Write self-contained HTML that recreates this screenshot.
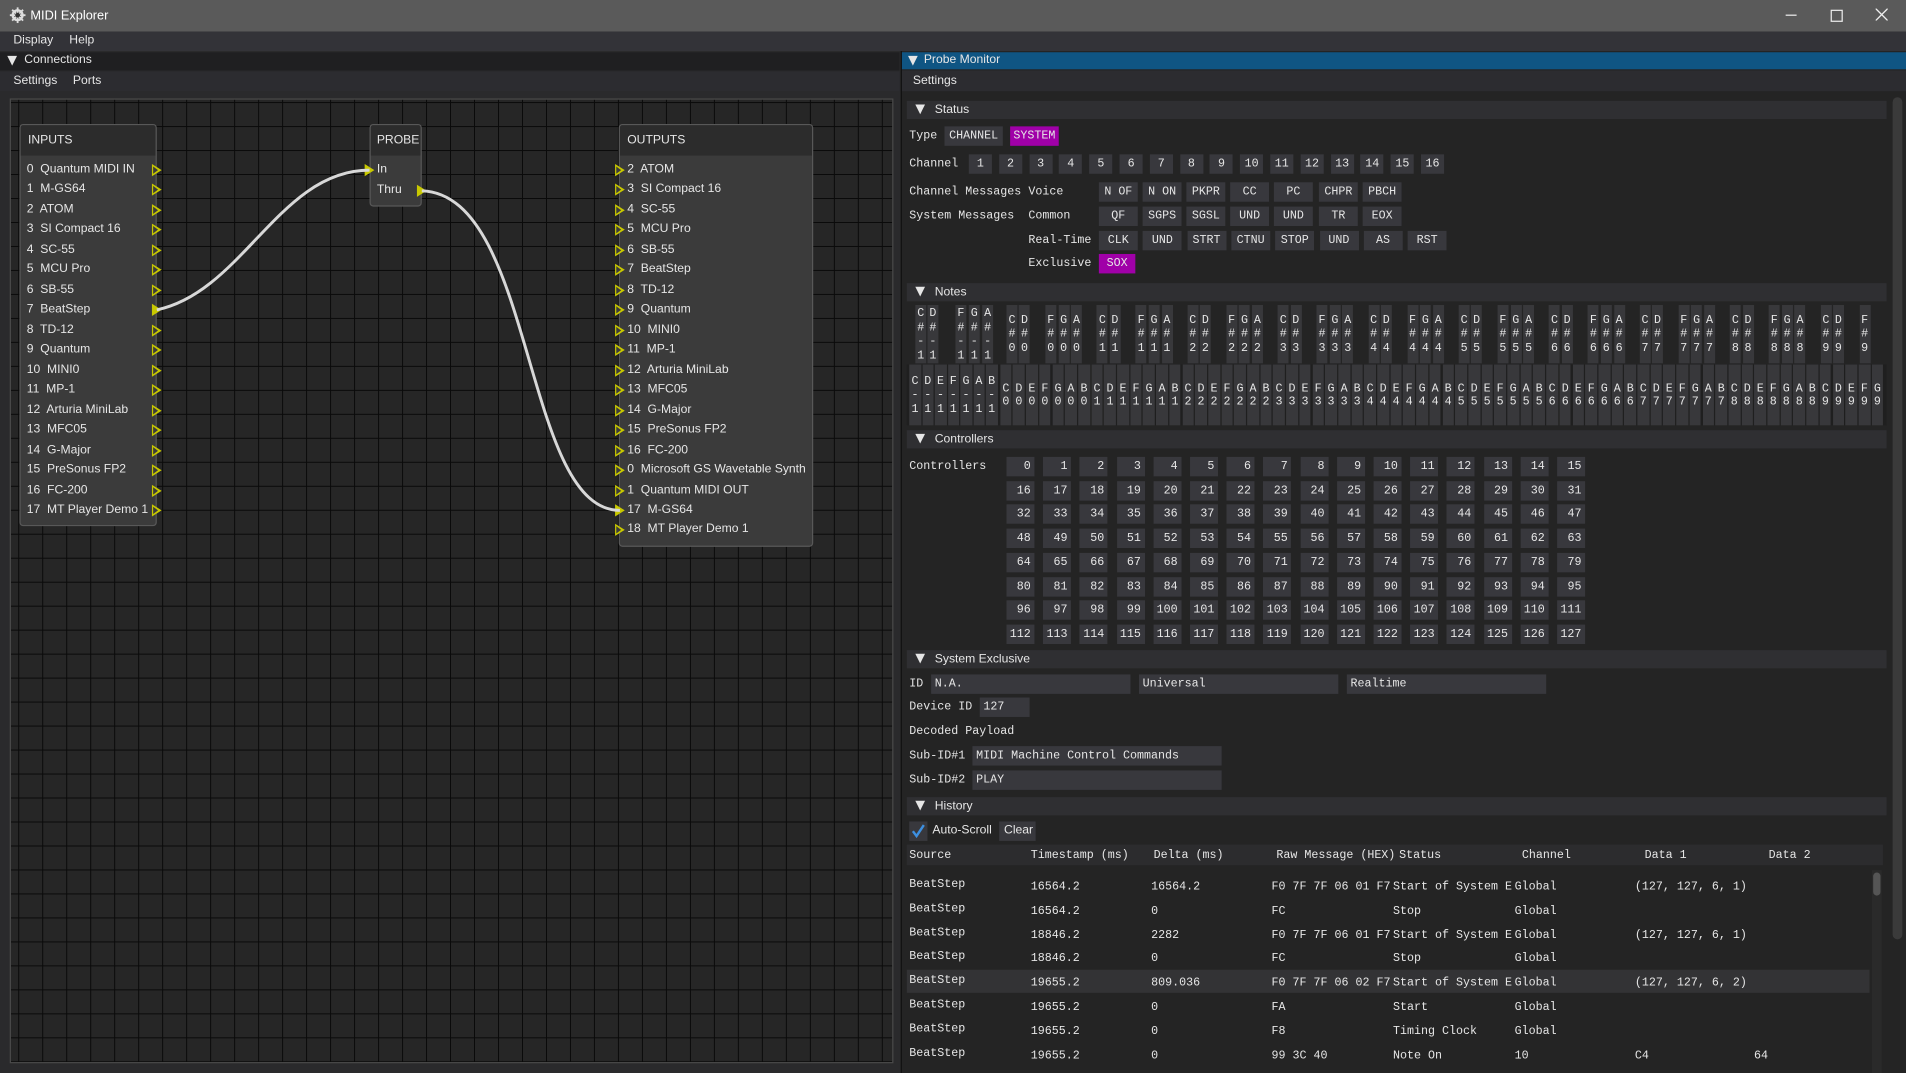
<!DOCTYPE html>
<html><head><meta charset="utf-8">
<style>
html,body{margin:0;padding:0;width:1906px;height:1073px;overflow:hidden;background:#242424}
#w{position:absolute;left:0;top:0;width:1568px;height:883px;transform:scale(1.21556,1.21518);transform-origin:0 0;background:#242424;font-family:"Liberation Sans",sans-serif;font-size:10px;color:#e6e6e6}
.a{position:absolute}
.m{font-family:"Liberation Mono",monospace;font-size:9.6px;white-space:pre}
.t{line-height:16px;white-space:nowrap}
.b{position:absolute;background:#38383d;height:16px;line-height:16px;text-align:center;font-family:"Liberation Mono",monospace;font-size:9.6px;color:#e6e6e6}
.sel{background:#a000a8}
.sh{position:absolute;left:746px;width:806px;height:15px;background:#2f2f32;line-height:15px}
.sh span{position:absolute;left:23px}
.tri{position:absolute;left:7px;top:3px;width:0;height:0;border-left:4.5px solid transparent;border-right:4.5px solid transparent;border-top:8px solid #e6e6e6}
.node{position:absolute;background:#3b3b3b;border:1px solid #585858;border-radius:3px;overflow:hidden}
.nh{height:25px;background:#2c2c2c;line-height:25px;padding-left:6px}
.pin{position:absolute;width:0;height:0;border-top:5px solid transparent;border-bottom:5px solid transparent;border-left:8px solid #c8c800}
.pin:after{content:"";position:absolute;left:-7px;top:-3px;border-top:3px solid transparent;border-bottom:3px solid transparent;border-left:4.5px solid #3b3b3b}
.pf:after{display:none}
.nk{position:absolute;background:#38383b;display:flex;flex-direction:column;justify-content:center;align-items:center;font-family:"Liberation Mono",monospace;font-size:9.6px;line-height:11.5px;color:#e6e6e6}
.fld{position:absolute;background:#38383d;height:16px;line-height:16px;padding-left:3px;box-sizing:border-box}
</style></head><body>
<div id="w">
<div class="a" style="left:0;top:0;width:1568px;height:26px;background:#5a5a5a"></div>
<svg class="a" style="left:8px;top:6px" width="13" height="13" viewBox="0 0 13 13"><circle cx="6.5" cy="6.5" r="5" fill="#ddd"/><circle cx="6.5" cy="6.5" r="3" fill="#222"/><g stroke="#ddd" stroke-width="1.5"><line x1="6.5" y1="0" x2="6.5" y2="13"/><line x1="0" y1="6.5" x2="13" y2="6.5"/><line x1="2" y1="2" x2="11" y2="11"/><line x1="11" y1="2" x2="2" y2="11"/></g><circle cx="6.5" cy="6.5" r="2" fill="#333"/></svg>
<div class="a t" style="left:25px;top:5px;font-size:10.5px;color:#fff">MIDI Explorer</div>
<div class="a" style="left:1469px;top:12px;width:9px;height:1px;background:#eee"></div>
<div class="a" style="left:1506px;top:8px;width:8px;height:8px;border:1px solid #eee"></div>
<svg class="a" style="left:1543px;top:7px" width="10" height="10"><path d="M0 0L10 10M10 0L0 10" stroke="#eee" stroke-width="1.1"/></svg>
<div class="a" style="left:0;top:26px;width:1568px;height:16px;background:#333338"></div>
<div class="a t" style="left:11px;top:26px">Display</div>
<div class="a t" style="left:57px;top:26px">Help</div>
<div class="a" style="left:0;top:42px;width:741px;height:841px;background:#2a2a2c"></div>
<div class="a" style="left:0;top:43px;width:740px;height:15px;background:#1f1f21"></div>
<div class="tri" style="left:6px;top:46px"></div>
<div class="a t" style="left:20px;top:42px">Connections</div>
<div class="a" style="left:0;top:59px;width:740px;height:16px;background:#2c2c30"></div>
<div class="a t" style="left:11px;top:59px">Settings</div>
<div class="a t" style="left:60px;top:59px">Ports</div>
<div class="a" style="left:8px;top:81px;width:727px;height:794px;border:1px solid #4a4a4a;box-sizing:border-box;background-color:#262626;background-image:linear-gradient(to right,#0a0a0a 1px,transparent 1px),linear-gradient(to bottom,#0a0a0a 1px,transparent 1px);background-size:19.74px 19.74px;background-position:6px 2px"></div>
<div id="nodes"></div>
<svg class="a" style="left:0;top:0" width="740" height="883"><path d="M129 255 C 200 240, 230 140, 304 140" stroke="#d8d8d8" stroke-width="2.4" fill="none"/><path d="M347 157 C 440 160, 430 420, 510 420" stroke="#d8d8d8" stroke-width="2.4" fill="none"/></svg>
<div class="a" style="left:741px;top:42px;width:827px;height:841px;background:#242424;border-left:1px solid #111"></div>
<div class="a" style="left:742px;top:43px;width:826px;height:14px;background:#0f5583"></div>
<div class="tri" style="left:747px;top:46px"></div>
<div class="a t" style="left:760px;top:42px;line-height:15px">Probe Monitor</div>
<div class="a" style="left:742px;top:58px;width:826px;height:17px;background:#2c2c30"></div>
<div class="a t" style="left:751px;top:59px">Settings</div>
<div class="a" style="left:1557px;top:80px;width:8px;height:693px;background:#3a3a3a;border-radius:4px"></div>
<div id="r"></div>
</div>
<script>
var W='';function A(h){W+=h}
function txt(x,y,s,cls){A('<div class="a m" style="left:'+x+'px;top:'+(y-6)+'px;line-height:12px'+(cls||'')+'">'+s+'</div>')}
function btn(x,y,w,s,sel,al){A('<div class="b'+(sel?' sel':'')+'" style="left:'+x+'px;top:'+(y-8)+'px;width:'+w+'px;'+(al?'text-align:right;box-sizing:border-box;padding-right:3px':'')+'">'+s+'</div>')}
function sec(y,s){A('<div class="sh" style="top:'+y+'px"><div class="tri"></div><span>'+s+'</span></div>')}
var ins=["0  Quantum MIDI IN","1  M-GS64","2  ATOM","3  SI Compact 16","4  SC-55","5  MCU Pro","6  SB-55","7  BeatStep","8  TD-12","9  Quantum","10  MINI0","11  MP-1","12  Arturia MiniLab","13  MFC05","14  G-Major","15  PreSonus FP2","16  FC-200","17  MT Player Demo 1"];
var outs=["2  ATOM","3  SI Compact 16","4  SC-55","5  MCU Pro","6  SB-55","7  BeatStep","8  TD-12","9  Quantum","10  MINI0","11  MP-1","12  Arturia MiniLab","13  MFC05","14  G-Major","15  PreSonus FP2","16  FC-200","0  Microsoft GS Wavetable Synth","1  Quantum MIDI OUT","17  M-GS64","18  MT Player Demo 1"];
var N='<div class="node" style="left:16px;top:102px;width:111px;height:329px"><div class="nh">INPUTS</div></div>';
N+='<div class="node" style="left:304px;top:102px;width:41px;height:66px"><div class="nh" style="padding-left:5px">PROBE</div></div>';
N+='<div class="node" style="left:509px;top:102px;width:158px;height:346px"><div class="nh">OUTPUTS</div></div>';
for(var i=0;i<ins.length;i++){var y=140+i*16.47;N+='<div class="a t" style="left:22px;top:'+(y-8)+'px;white-space:pre">'+ins[i]+'</div><div class="pin'+(i==7?' pf':'')+'" style="left:125px;top:'+(y-5)+'px"></div>';}
for(var i=0;i<outs.length;i++){var y=140+i*16.47;N+='<div class="a t" style="left:516px;top:'+(y-8)+'px;white-space:pre">'+outs[i]+'</div><div class="pin'+(i==17?' pf':'')+'" style="left:506px;top:'+(y-5)+'px"></div>';}
N+='<div class="a t" style="left:310px;top:132px">In</div><div class="a t" style="left:310px;top:149px">Thru</div><div class="pin pf" style="left:300px;top:135px"></div><div class="pin pf" style="left:343px;top:152px"></div>';
document.getElementById('nodes').innerHTML=N;
sec(83,'Status');
txt(748,112,'Type');btn(777,112,48,'CHANNEL');btn(831,112,40,'SYSTEM',1);
txt(748,135,'Channel');for(var i=1;i<=16;i++)btn(797+(i-1)*24.8,135,19,''+i);
txt(748,158,'Channel Messages');txt(846,158,'Voice');
var vx=[904,940,976,1012,1048,1085,1121];
['N OF','N ON','PKPR','CC','PC','CHPR','PBCH'].forEach(function(s,i){btn(vx[i],158,32,s)});
txt(748,178,'System Messages');txt(846,178,'Common');
['QF','SGPS','SGSL','UND','UND','TR','EOX'].forEach(function(s,i){btn(vx[i],178,32,s)});
txt(846,198,'Real-Time');
['CLK','UND','STRT','CTNU','STOP','UND','AS','RST'].forEach(function(s,i){btn(904+i*36.3,198,32,s)});
txt(846,217,'Exclusive');btn(904,217,30,'SOX',1);
sec(233,'Notes');
var bl=['C','D','F','G','A'];
var off=[5.3,15.6,37.2,47.8,58.4];
for(var o=-1;o<=9;o++){for(var k=0;k<5;k++){if(o==9&&k>2)continue;var x;if(o==-1)x=[753,763,786,797,808][k];else x=822.7+o*74.4+off[k];
var s=o==-1?bl[k]+'<br>#<br>-<br>1':bl[k]+'<br>#<br>'+o;A('<div class="nk" style="left:'+x+'px;top:251px;width:9px;height:48px">'+s+'</div>');}}
var wl=['C','D','E','F','G','A','B'];
A('<div class="a" style="left:746px;top:300px;width:806px;height:50px;background:#1f1f1f"></div>');
for(var i=0;i<7;i++)A('<div class="nk" style="left:'+(748+i*10.5)+'px;top:300px;width:9.5px;height:50px">'+wl[i]+'<br>-<br>1</div>');
for(var i=0;i<68;i++){var o=Math.floor(i/7);A('<div class="nk" style="left:'+(822.7+i*10.7)+'px;top:300px;width:9.7px;height:50px">'+wl[i%7]+'<br>'+o+'</div>');}
sec(354,'Controllers');
txt(748,384,'Controllers');
for(var i=0;i<128;i++){var c=i%16,r=Math.floor(i/16);btn(828+c*30.2,384+r*19.7,23,''+i,0,1);}
sec(535,'System Exclusive');
txt(748,563,'ID');
A('<div class="fld m" style="left:766px;top:555px;width:164px">N.A.</div><div class="fld m" style="left:937px;top:555px;width:164px">Universal</div><div class="fld m" style="left:1108px;top:555px;width:164px">Realtime</div>');
txt(748,582,'Device ID');A('<div class="fld m" style="left:806px;top:574px;width:41px">127</div>');
txt(748,602,'Decoded Payload');
txt(748,622,'Sub-ID#1');A('<div class="fld m" style="left:800px;top:614px;width:205px">MIDI Machine Control Commands</div>');
txt(748,642,'Sub-ID#2');A('<div class="fld m" style="left:800px;top:634px;width:205px">PLAY</div>');
sec(656,'History');
A('<div class="a" style="left:748px;top:676px;width:15px;height:16px;background:#38383d"></div><svg class="a" style="left:749px;top:678px" width="13" height="12"><path d="M2 6L5 10L11 1" stroke="#3d8fe0" stroke-width="2" fill="none"/></svg>');
A('<div class="a t" style="left:767px;top:676px">Auto-Scroll</div><div class="a" style="left:822px;top:676px;width:30px;height:16px;background:#38383d"></div><div class="a t" style="left:826px;top:676px">Clear</div>');
A('<div class="a" style="left:746px;top:695px;width:803px;height:17px;background:#2c2c2e"></div>');
var cx=[748,848,949,1050,1151,1252,1353,1455];
['Source','Timestamp (ms)','Delta (ms)','Raw Message (HEX)','Status','Channel','Data 1','Data 2'].forEach(function(s,i){txt(cx[i],704,s)});
A('<div class="a" style="left:746px;top:798px;width:792px;height:19px;background:#333335"></div>');
A('<div class="a" style="left:1540px;top:716px;width:8px;height:167px;background:#2a2a2a"></div><div class="a" style="left:1541px;top:718px;width:6px;height:19px;background:#555;border-radius:3px"></div>');
var rows=[['16564.2','16564.2','F0 7F 7F 06 01 F7','Start of System E','Global','(127, 127, 6, 1)',''],['16564.2','0','FC','Stop','Global','',''],['18846.2','2282','F0 7F 7F 06 01 F7','Start of System E','Global','(127, 127, 6, 1)',''],['18846.2','0','FC','Stop','Global','',''],['19655.2','809.036','F0 7F 7F 06 02 F7','Start of System E','Global','(127, 127, 6, 2)',''],['19655.2','0','FA','Start','Global','',''],['19655.2','0','F8','Timing Clock','Global','',''],['19655.2','0','99 3C 40','Note On','10','C4','64']];
var dx=[848,947,1046,1146,1246,1345,1443];
rows.forEach(function(r,j){var y=730+j*19.8;txt(748,y-2,'BeatStep');r.forEach(function(s,i){if(s)txt(dx[i],y,s)})});
document.getElementById('r').innerHTML=W;
</script>
</body></html>
